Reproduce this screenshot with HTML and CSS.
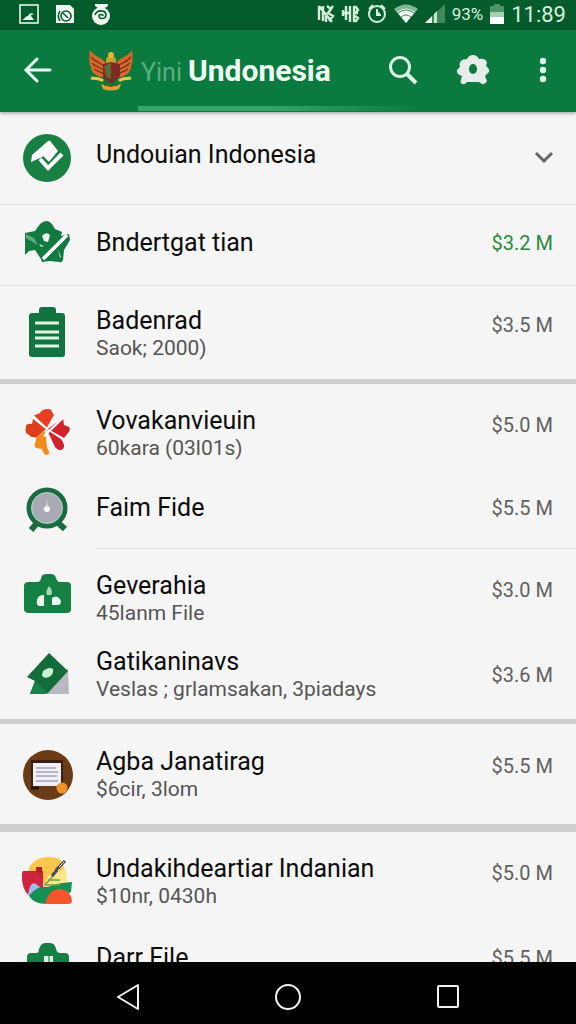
FILE: index.html
```html
<!DOCTYPE html>
<html lang="id">
<head>
  <meta charset="UTF-8">
  <meta name="viewport" content="width=device-width, initial-scale=1.0">
  <title>Undonesia</title>
  <link rel="stylesheet" href="styles.css">
</head>
<body>
  <div class="screen">
    <div class="statusbar">
      <div class="status-left">
        <svg width="20" height="20" viewBox="0 0 20 20"><rect x="1" y="1" width="18" height="18" fill="none" stroke="#e6f5ea" stroke-width="1.6"/><path d="M3 16c3-1 3-4 6-4 1-3 5-4 6-1-2-1-3 0-3 1l3 4z" fill="#e6f5ea"/></svg>
        <svg width="20" height="20" viewBox="0 0 20 20"><path d="M1 1h14l4 4v14H1z" fill="#eefaf0"/><circle cx="11" cy="12" r="5" fill="none" stroke="#0b5a2e" stroke-width="1.6"/><path d="M5 7c-2 3-2 7 0 10M8 9l5 5" stroke="#0b5a2e" stroke-width="1.5" fill="none"/></svg>
        <svg width="20" height="20" viewBox="0 0 20 20"><path d="M4 0h13v2l-3 2H7L4 2z" fill="#eefaf0"/><circle cx="10" cy="12" r="9" fill="#eefaf0"/><path d="M12 12c0-2-4-2-4 0 0 4 7 3 7-1 0-5-9-6-11 0" fill="none" stroke="#0b5a2e" stroke-width="1.6"/></svg>
      </div>
      <div class="status-right">
        <svg width="18" height="20" viewBox="0 0 18 20" fill="none" stroke="#d6efdc" stroke-width="2.4"><path d="M2 2v14M2 2l13 16M6 2v15M10 2l4 3-3 4 5 3-4 5M16 2l-3 4M9 12v6"/></svg>
        <svg width="18" height="20" viewBox="0 0 18 20" fill="none" stroke="#d6efdc" stroke-width="2.4"><path d="M4 2v14M1 6v6M8 2v16M11 3h3l2 3-3 3M11 9h5M11 17h3l2-3-3-2M0 9h8M12 3v14"/></svg>
        <svg width="20" height="20" viewBox="0 0 20 20" fill="none" stroke="#d6efdc" stroke-width="2"><circle cx="10" cy="10" r="8"/><path d="M10 5v6h4M2 5l4-4M14 1l4 4"/><circle cx="11" cy="10" r="2" fill="#d6efdc" stroke="none"/></svg>
        <svg width="24" height="20" viewBox="0 0 24 20"><path d="M0 5Q12-4 24 5L12 19z" fill="#7fb893"/><path d="M3 8q9-7 18 0l-9 11z" fill="#effaf1"/><path d="M4 9q8-6 16 0M7 13q5-4 10 0" fill="none" stroke="#3f8a5b" stroke-width="1"/></svg>
        <svg width="20" height="20" viewBox="0 0 20 20"><path d="M20 0v19H0z" fill="#3f8a5b"/><path d="M7 12v7H0z" fill="#effaf1"/><path d="M9 10v9h3V7z" fill="#c7e4cf"/></svg>
        <span class="battery-level">93%</span>
        <svg width="14" height="20" viewBox="0 0 14 20"><path d="M4 0h6v2h4v8H0V2h4z" fill="#4d9568"/><path d="M0 8h14v5H0z" fill="#a7cdb3"/><path d="M0 13h14v7H0z" fill="#fff"/></svg>
        <span class="clock">11:89</span>
      </div>
    </div>

    <header class="appbar">
      <div class="toolbar">
        <button class="icon-btn" type="button" aria-label="Back">
          <svg width="28" height="28" viewBox="0 0 28 28" fill="none" stroke="#e8fbee" stroke-width="3" stroke-linecap="round"><path d="M26 14H3M13 3L2 14l11 11"/></svg>
        </button>
        <svg class="crest" width="44" height="42" viewBox="0 0 44 42">
          <path d="M1 1c3 6 11 7 15 12l1 15c-8 1-15-4-15-10C0 14 0 7 1 1z" fill="#d9672b"/>
          <path d="M43 1c-3 6-11 7-15 12l-1 15c8 1 15-4 15-10 2-4 2-11 1-17z" fill="#d9672b"/>
          <path d="M2 8c5 6 9 5 14 10M3 14c5 5 8 4 13 8M5 20c4 3 7 3 11 5M42 8c-5 6-9 5-14 10M41 14c-5 5-8 4-13 8M39 20c-4 3-7 3-11 5" fill="none" stroke="#7c3218" stroke-width="1.3"/>
          <path d="M17 10l5-6 5 6v5H17z" fill="#caa02c"/><circle cx="22" cy="6" r="3" fill="#e2b93a"/>
          <path d="M14 15l8-2 9 2v12l-8 8-9-6z" fill="#7d2b20"/><path d="M15 17l7-3v16l-5-2z" fill="#5f6a35"/>
          <path d="M2 29c5 1 9 0 12 3M42 29c-5 1-9 0-12 3" fill="none" stroke="#e6c84a" stroke-width="3"/>
          <path d="M12 35q10 4 20 0l-2 5q-8 3-16 0z" fill="#d9a832"/><path d="M15 36q7 3 14 0" stroke="#8a3b1a" fill="none"/>
        </svg>
        <h1 class="title"><span class="title-faded">Yini</span>Undonesia</h1>
        <div class="actions">
          <button class="icon-btn" type="button" aria-label="Search">
            <svg width="30" height="30" viewBox="0 0 30 30" fill="none" stroke="#def7e5" stroke-width="3"><circle cx="12" cy="12" r="9.5"/><path d="M19 19l9 9" stroke-width="4"/></svg>
          </button>
          <button class="icon-btn" type="button" aria-label="Settings">
            <svg width="34" height="32" viewBox="0 0 34 32"><path d="M11 5Q13 1 17 1t6 4q7-1 8 4l-1 3q4 3 3 6l-4 4 2 5q-2 4-5 3l-3-2H11l-2 2q-6 1-4-5l1-3q-6-2-5-6l3-3Q2 5 11 5z" fill="#e6ece8"/><ellipse cx="17" cy="15" rx="4" ry="5" fill="#0b7a3f"/></svg>
          </button>
          <button class="icon-btn" type="button" aria-label="More options">
            <svg width="8" height="26" viewBox="0 0 8 26" fill="#def7e5"><circle cx="4" cy="4" r="3.2"/><circle cx="4" cy="13" r="3.2"/><circle cx="4" cy="22" r="3.2"/></svg>
          </button>
        </div>
      </div>
      <div class="indicator"></div>
    </header>

    <main class="content">
      <ul class="list">
        <li class="row row-head">
          <svg class="icon" viewBox="0 0 48 48"><circle cx="24" cy="24" r="24" fill="#188043"/><path d="M8 28l1-7L25 7q2-1 3 1l7 9-10 12-8-5z" fill="#fff"/><path d="M19 23l7 7 12-13" fill="none" stroke="#188043" stroke-width="3"/><path d="M17 25l8 9 14-14" fill="none" stroke="#fff" stroke-width="4"/></svg>
          <div class="text"><h2 class="name">Undouian Indonesia</h2></div>
          <button class="expand" type="button" aria-label="Expand"><svg width="18" height="12" viewBox="0 0 18 12" fill="none" stroke="#666" stroke-width="3"><path d="M1 1l8 8 8-8"/></svg></button>
        </li>
        <li class="row row-second">
          <svg class="icon" viewBox="0 0 48 48"><path d="M2 14l10-2 5-7q7-6 12 0l3 5 7 3-1 4 8-2 1 6-6 10-1 10q-1 3-4 2l-9-1-8 1-1-3-6-9-6 1-4 4z" fill="#127a40"/><path d="M3 15l8 4 4 7-12-7z" fill="#66a77e"/><path d="M20 40l24-24" stroke="#fff" stroke-width="3.5"/><path d="M19 17q4-5 8-1l-2 7-4-1z" fill="#f0faf2"/><path d="M16 25l5 2-3 1zM35 30l3 8-1 1z" fill="#bfe0c9"/></svg>
          <div class="text"><h2 class="name">Bndertgat tian</h2></div>
          <span class="amount amount-up">$3.2 M</span>
        </li>
        <li class="row">
          <svg class="icon" viewBox="0 0 48 48"><path d="M9 3h7v-3q0-3 3-3h11q3 0 3 3v3h6q3 0 3 3v38q0 3-3 3H9q-3 0-3-3V6q0-3 3-3z" fill="#137340"/><path d="M12 13h24M12 22h24M12 28h24M12 36h24" stroke="#d8f8e2" stroke-width="2.8"/></svg>
          <div class="text"><h2 class="name">Badenrad</h2><p class="detail">Saok; 2000)</p></div>
          <span class="amount">$3.5 M</span>
        </li>
      </ul>

      <ul class="list">
        <li class="row row-tight">
          <svg class="icon" viewBox="0 0 48 48"><path d="M10 6l7-3q2-4 8-4 4 0 4 3l2 3-8 14z" fill="#e8401f"/><path d="M3 17q0-4 6-3l1-5 13 10-9 8q-6 1-8-2-5-3-3-8z" fill="#de401d"/><path d="M40 8l1 7 5 2q2 2-1 6l-4 5-16-9z" fill="#d3222a"/><path d="M24 20l14 9q5 7 2 10-4 3-8-2z" fill="#cf2430"/><path d="M22 21l-9 6v4q-3 4 0 7l6 1 2 5q5 2 5-2l-2-5z" fill="#f28a1c"/><path d="M9 5l15 14M41 7L21 26" stroke="#fff" stroke-width="2"/></svg>
          <div class="text"><h2 class="name">Vovakanvieuin</h2><p class="detail">60kara (03l01s)</p></div>
          <span class="amount">$5.0 M</span>
        </li>
        <li class="row row-single">
          <svg class="icon" viewBox="0 0 48 48"><path d="M15 38l-7 8M34 38l8 7" stroke="#1a6b41" stroke-width="6"/><circle cx="24" cy="24" r="18" fill="#a8aab4" stroke="#1a6b41" stroke-width="5"/><circle cx="24" cy="24" r="15.5" fill="none" stroke="#b5d6c2"/><circle cx="24" cy="25" r="3" fill="#fff"/><path d="M24 16l1 8h-2z" fill="#e4e7ea"/></svg>
          <div class="text"><h2 class="name">Faim Fide</h2></div>
          <span class="amount">$5.5 M</span>
        </li>
        <li class="row row-tight">
          <svg class="icon" viewBox="0 0 48 48"><path d="M6 7h9q3-1 3-4 1-4 5-4h5q4 0 5 4 1 4 4 4h7q4 0 4 4v23q0 4-4 4H6q-5 0-5-4V11q0-4 5-4z" fill="#148043"/><path d="M21 20v11h-5q-3-1-2-6 1-5 7-5zM29 23q4-3 7 0 4 4 0 7h-7z" fill="#ecfff1"/><path d="M26 11q5 6 2 9h-4q-2-3 2-9z" fill="#a6d8b6"/></svg>
          <div class="text"><h2 class="name">Geverahia</h2><p class="detail">45lanm File</p></div>
          <span class="amount">$3.0 M</span>
        </li>
        <li class="row row-after">
          <svg class="icon" viewBox="0 0 48 48"><path d="M45 17l1 26H24z" fill="#b9bac1"/><path d="M26 2l19 18-20 22-3 1H7l5-13-8-4z" fill="#136c39"/><path d="M12 30l13 12-3 1H7z" fill="#1c8148"/><path d="M20 20q6-5 10-2 1 5-4 8-6 2-7-2z" fill="#c8f1d5"/></svg>
          <div class="text"><h2 class="name">Gatikaninavs</h2><p class="detail">Veslas ; grlamsakan, 3piadays</p></div>
          <span class="amount amount-middle">$3.6 M</span>
        </li>
      </ul>

      <ul class="list list-thick">
        <li class="row row-roomy">
          <svg class="icon" viewBox="0 0 48 48"><circle cx="25" cy="24" r="25" fill="#6a3b14"/><path d="M8 9h32v26H8z" fill="#3b1d10"/><path d="M10 12h28v23H10z" fill="#f1eff6"/><path d="M13 17h20M13 21h22M13 25h21M13 30h22" stroke="#a5a3b5" stroke-width="1.5"/><path d="M8 37h8" stroke="#24120a" stroke-width="3"/><circle cx="39" cy="37" r="5.5" fill="#ef9424"/></svg>
          <div class="text"><h2 class="name">Agba Janatirag</h2><p class="detail">$6cir, 3lom</p></div>
          <span class="amount">$5.5 M</span>
        </li>
      </ul>

      <ul class="list list-last">
        <li class="row row-tight">
          <svg class="icon" viewBox="0 0 48 48"><path d="M5 13Q10-1 25-1q10 0 15 5l3 22H20z" fill="#fbc64b"/><path d="M25 18q15-6 18-8l1 16-23 7z" fill="#fae68d"/><path d="M0 13h13V9h6v4h1v20L6 38Q-1 31-1 20v-5z" fill="#cf2440"/><path d="M14 9h5v6h-5z" fill="#b91d21"/><path d="M5 37q2-15 8-11l4 3-7 11z" fill="#a7b7ea"/><path d="M6 38q8-11 19-9 9-4 24-5l-1 10-22 12q-14 1-20-8z" fill="#149052"/><path d="M22 46q4-16 16-15 10 2 11 12 0 3-4 3z" fill="#f2562a"/><path d="M21 28l9-10M25 22h12M23 27h14" stroke="#739f3e" stroke-width="1.5"/><path d="M33 12l9-9M29 18l5-6" stroke="#454a60" stroke-width="3"/><path d="M36 9l5-5" stroke="#fff"/></svg>
          <div class="text"><h2 class="name">Undakihdeartiar Indanian</h2><p class="detail">$10nr, 0430h</p></div>
          <span class="amount">$5.0 M</span>
        </li>
        <li class="row row-single">
          <svg class="icon" viewBox="0 0 48 48"><path d="M8 19h6q2-1 2-4 2-6 6-6h5q5 0 6 6 1 4 4 4h5q4 0 4 4v23H4V23q0-4 4-4z" fill="#147f44"/><path d="M21 22h9v14h-9z" fill="#d9f5e2"/><path d="M25 22h2v10h-2z" fill="#6cae85"/></svg>
          <div class="text"><h2 class="name">Darr File</h2></div>
          <span class="amount">$5.5 M</span>
        </li>
      </ul>
    </main>

    <nav class="navbar" aria-label="System">
      <button class="icon-btn" type="button" aria-label="Back"><svg width="26" height="28" viewBox="0 0 26 28" fill="none" stroke="#f2f2f2" stroke-width="2" stroke-linejoin="round"><path d="M23 2v24L3 14z"/></svg></button>
      <button class="icon-btn" type="button" aria-label="Home"><svg width="28" height="28" viewBox="0 0 28 28" fill="none" stroke="#f2f2f2" stroke-width="2"><circle cx="14" cy="14" r="12"/></svg></button>
      <button class="icon-btn" type="button" aria-label="Recent apps"><svg width="24" height="24" viewBox="0 0 24 24" fill="none" stroke="#f2f2f2" stroke-width="2"><rect x="2" y="1" width="20" height="21" rx="1"/></svg></button>
    </nav>
  </div>
</body>
</html>
```
FILE: styles.css
```css
* {
  box-sizing: border-box;
}
body {
  margin: 0;
  font-family: Roboto, "Liberation Sans", sans-serif;
  background-color: #f5f5f5;
  color: #0c0c0c;
}
h1, h2, p, ul {
  margin: 0;
  padding: 0;
}
button {
  border: 0;
  padding: 0;
  background: none;
}
svg {
  display: block;
  flex-shrink: 0;
  overflow: visible;
}
.screen {
  display: flex;
  flex-direction: column;
  height: 100vh;
}

/* status bar */
.statusbar {
  display: flex;
  justify-content: space-between;
  align-items: center;
  height: 30px;
  padding: 0 10px 2px 19px;
  background-color: #045c2d;
  color: #d6efdc;
}
.status-left {
  display: flex;
  gap: 16px;
}
.status-right {
  display: flex;
  align-items: center;
  gap: 7px;
}
.battery-level {
  font-size: 17px;
}
.clock {
  font-size: 22px;
}

/* app bar */
.appbar {
  position: relative;
  background-color: #0b7a3f;
  box-shadow: 0 1px 4px rgba(0, 0, 0, 0.4);
}
.toolbar {
  display: flex;
  align-items: center;
  height: 76px;
  padding: 4px 9px 0 14px;
}
.icon-btn {
  display: flex;
  align-items: center;
  justify-content: center;
  width: 48px;
  height: 48px;
}
.crest {
  margin-left: 27px;
}
.title {
  display: flex;
  align-items: baseline;
  margin-left: 8px;
  font-size: 30px;
  font-weight: 700;
  color: #edfff2;
}
.title-faded {
  width: 47px;
  font-size: 25px;
  font-weight: 400;
  color: #5cae80;
}
.actions {
  display: flex;
  gap: 22px;
  margin-left: auto;
}
.indicator {
  height: 6px;
  margin-left: 24%;
  border-bottom: 1px solid #0b7a3f;
  background: linear-gradient(to right, #35a468 30%, #0b7a3f 65%);
}

/* list */
.content {
  flex: 1;
  min-height: 0;
  overflow: hidden;
}
.list {
  list-style: none;
  border-bottom: 5px solid #cfcfcf;
}
.list-thick {
  border-bottom-width: 8px;
}
.list-last {
  border-bottom: 0;
}
.row {
  display: flex;
  align-items: center;
  gap: 25px;
  padding: 21px 23px 18px;
}
.row-head {
  padding: 22px 23px;
  border-bottom: 1px solid #dedede;
}
.row-head .text {
  padding-bottom: 6px;
}
.row-second {
  padding: 14px 23px 18px;
  border-bottom: 1px solid #dedede;
}
.row-tight {
  padding: 23px 23px 6px;
}
.list-last .row-tight {
  padding-bottom: 8px;
}
.row-single {
  padding: 17px 23px;
  background: linear-gradient(#e2e2e2, #e2e2e2) 96px 100% no-repeat;
  background-size: 100% 1px;
}
.row-after {
  padding: 16px 23px 17px;
}
.row-roomy {
  padding: 24px 23px 22px;
}
.icon {
  width: 48px;
  height: 48px;
}
.text {
  flex: 1;
  min-width: 0;
}
.name {
  font-size: 25px;
  font-weight: 400;
  line-height: 28px;
}
.detail {
  font-size: 21px;
  line-height: 26px;
  color: #555;
}
.amount {
  font-size: 20px;
  line-height: 36px;
  align-self: flex-start;
  color: #606060;
}
.row-second .amount,
.row-single .amount,
.amount-middle {
  align-self: center;
}
.amount-up {
  color: #2b8a3e;
}

/* system navigation */
.navbar {
  display: flex;
  justify-content: center;
  align-items: center;
  gap: 112px;
  height: 62px;
  padding-top: 8px;
  background-color: #000;
}
```
